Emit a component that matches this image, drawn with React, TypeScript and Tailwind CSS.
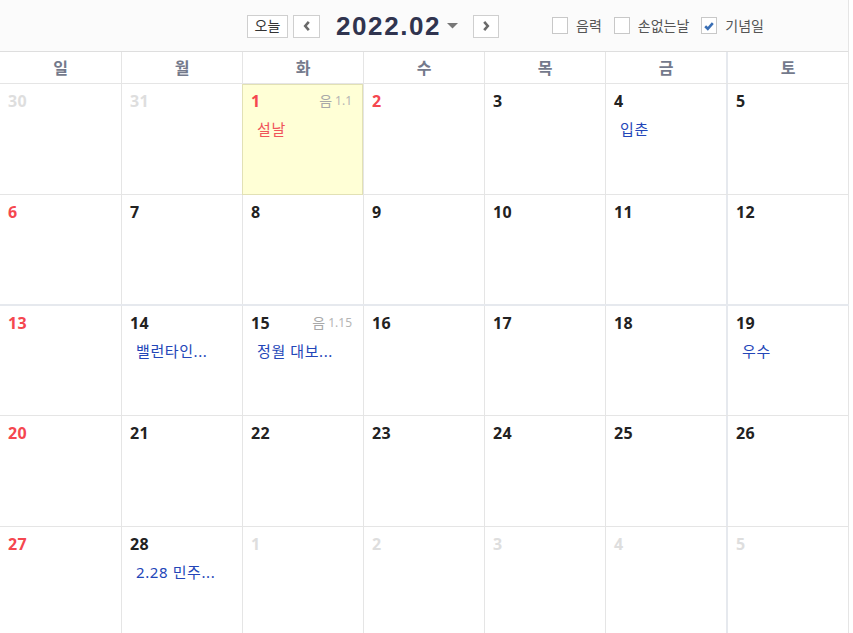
import React from "react";

type Cell = {
  d: number;
  other?: boolean;
  red?: boolean;
  today?: boolean;
  lunar?: string;
  ev?: string;
  evRed?: boolean;
};

const weeks: Cell[][] = [
  [
    { d: 30, other: true },
    { d: 31, other: true },
    { d: 1, red: true, today: true, lunar: "1.1", ev: "설날", evRed: true },
    { d: 2, red: true },
    { d: 3 },
    { d: 4, ev: "입춘" },
    { d: 5 },
  ],
  [{ d: 6, red: true }, { d: 7 }, { d: 8 }, { d: 9 }, { d: 10 }, { d: 11 }, { d: 12 }],
  [
    { d: 13, red: true },
    { d: 14, ev: "밸런타인..." },
    { d: 15, lunar: "1.15", ev: "정월 대보..." },
    { d: 16 },
    { d: 17 },
    { d: 18 },
    { d: 19, ev: "우수" },
  ],
  [{ d: 20, red: true }, { d: 21 }, { d: 22 }, { d: 23 }, { d: 24 }, { d: 25 }, { d: 26 }],
  [
    { d: 27, red: true },
    { d: 28, ev: "2.28 민주..." },
    { d: 1, other: true },
    { d: 2, other: true },
    { d: 3, other: true },
    { d: 4, other: true },
    { d: 5, other: true },
  ],
];

const days = ["일", "월", "화", "수", "목", "금", "토"];

const colCls = [
  "w-[121px]",
  "w-[121px] border-l border-[#e5e5e5]",
  "w-[121px] border-l border-[#e5e5e5]",
  "w-[121px] border-l border-[#e5e5e5]",
  "w-[121px] border-l border-[#e5e5e5]",
  "w-[121px] border-l border-[#e5e5e5]",
  "w-[123px] border-l-2 border-r border-l-[#e6e9ee] border-r-[#e5e5e5]",
];

const rowCls = [
  "h-[111px] border-b border-[#e5e5e5]",
  "h-[111px] border-b-2 border-[#e6e9ee]",
  "h-[110px] border-b border-[#e5e5e5]",
  "h-[111px] border-b border-[#e5e5e5]",
  "h-[106px]",
];

const font = { fontFamily: '"Noto Sans", "Noto Sans CJK KR", sans-serif' };

function Check({ checked }: { checked?: boolean }) {
  return (
    <span className="w-[16px] h-[17px] border border-[#c8c8c8] bg-white flex items-center justify-center">
      {checked && (
        <svg width="12" height="12" viewBox="0 0 12 12">
          <path d="M2.2 6.3 L4.8 8.8 L9.8 3.2" fill="none" stroke="#3a6fb5" strokeWidth="2.6" />
        </svg>
      )}
    </span>
  );
}

export default function App() {
  return (
    <div className="w-[849px] bg-white" style={font}>
      {/* top bar */}
      <div className="h-[52px] bg-[#fbfbfb] border-b border-[#dedede] border-r border-r-[#e5e5e5] flex items-center relative">
        <div className="absolute left-[247px] top-[13px] flex items-center">
          <button className="w-[41px] h-[23px] border border-[#cfcfcf] bg-white text-[14px] text-[#333] flex items-center justify-center leading-none">
            오늘
          </button>
          <button className="ml-[5px] w-[27px] h-[23px] border border-[#cfcfcf] bg-white flex items-center justify-center">
            <svg width="10" height="12" viewBox="0 0 10 12">
              <path d="M6.8 1.8 L3.2 6 L6.8 10.2" fill="none" stroke="#6a6a6a" strokeWidth="2.6" />
            </svg>
          </button>
          <span
            className="ml-[16px] text-[26px] font-bold text-[#30344f] leading-none tracking-[1.6px]"
            style={{ fontFamily: '"Liberation Sans", Arial, sans-serif' }}
          >
            2022.02
          </span>
          <svg className="ml-[6px]" width="11" height="6" viewBox="0 0 11 6">
            <path d="M0 0 L11 0 L5.5 5.5 Z" fill="#777" />
          </svg>
          <button className="ml-[15px] w-[26px] h-[23px] border border-[#cfcfcf] bg-white flex items-center justify-center">
            <svg width="10" height="12" viewBox="0 0 10 12">
              <path d="M3.2 1.8 L6.8 6 L3.2 10.2" fill="none" stroke="#6a6a6a" strokeWidth="2.6" />
            </svg>
          </button>
        </div>
        <div className="absolute left-[552px] top-[17px] flex items-center text-[14px] text-[#555] leading-none">
          <Check />
          <span className="ml-[8px]">음력</span>
          <span className="ml-[12px]"><Check /></span>
          <span className="ml-[8px]">손없는날</span>
          <span className="ml-[12px]"><Check checked /></span>
          <span className="ml-[8px]">기념일</span>
        </div>
      </div>
      {/* day header */}
      <div className="flex h-[32px] border-b border-[#e5e5e5]">
        {days.map((d, i) => (
          <div
            key={d}
            className={`${colCls[i]} flex items-center justify-center text-[16px] font-bold text-[#747a8c]`}
          >
            {d}
          </div>
        ))}
      </div>
      {/* weeks */}
      {weeks.map((w, wi) => (
        <div key={wi} className={`flex ${rowCls[wi]}`}>
          {w.map((c, ci) => (
            <div key={ci} className={`${colCls[ci]} relative`}>
              {c.today && (
                <div className="absolute left-0 right-0 top-0 -bottom-px bg-[#ffffd6] border border-[#e2e1b5] -ml-px" />
              )}
              <div className="relative pt-[6px] pl-[8px] pr-[11px] flex items-center justify-between">
                <span
                  className={`text-[16px] font-bold leading-[22px] tracking-[0.3px] ${
                    c.other ? "text-[#dedede]" : c.red ? "text-[#f5474f]" : "text-[#222]"
                  }`}
                >
                  {c.d}
                </span>
                {c.lunar && (
                  <span className="flex items-center leading-none">
                    <span className="text-[14px] text-[#a8a8a8]">음</span>
                    <span className="ml-[3px] text-[12px] text-[#b5b5b5]">{c.lunar}</span>
                  </span>
                )}
              </div>
              {c.ev && (
                <div
                  className={`relative pl-[14px] mt-[7px] text-[15px] leading-[20px] tracking-[0.6px] whitespace-nowrap ${
                    c.evRed ? "text-[#f0545a]" : "text-[#2346b8]"
                  }`}
                >
                  {c.ev}
                </div>
              )}
            </div>
          ))}
        </div>
      ))}
    </div>
  );
}
